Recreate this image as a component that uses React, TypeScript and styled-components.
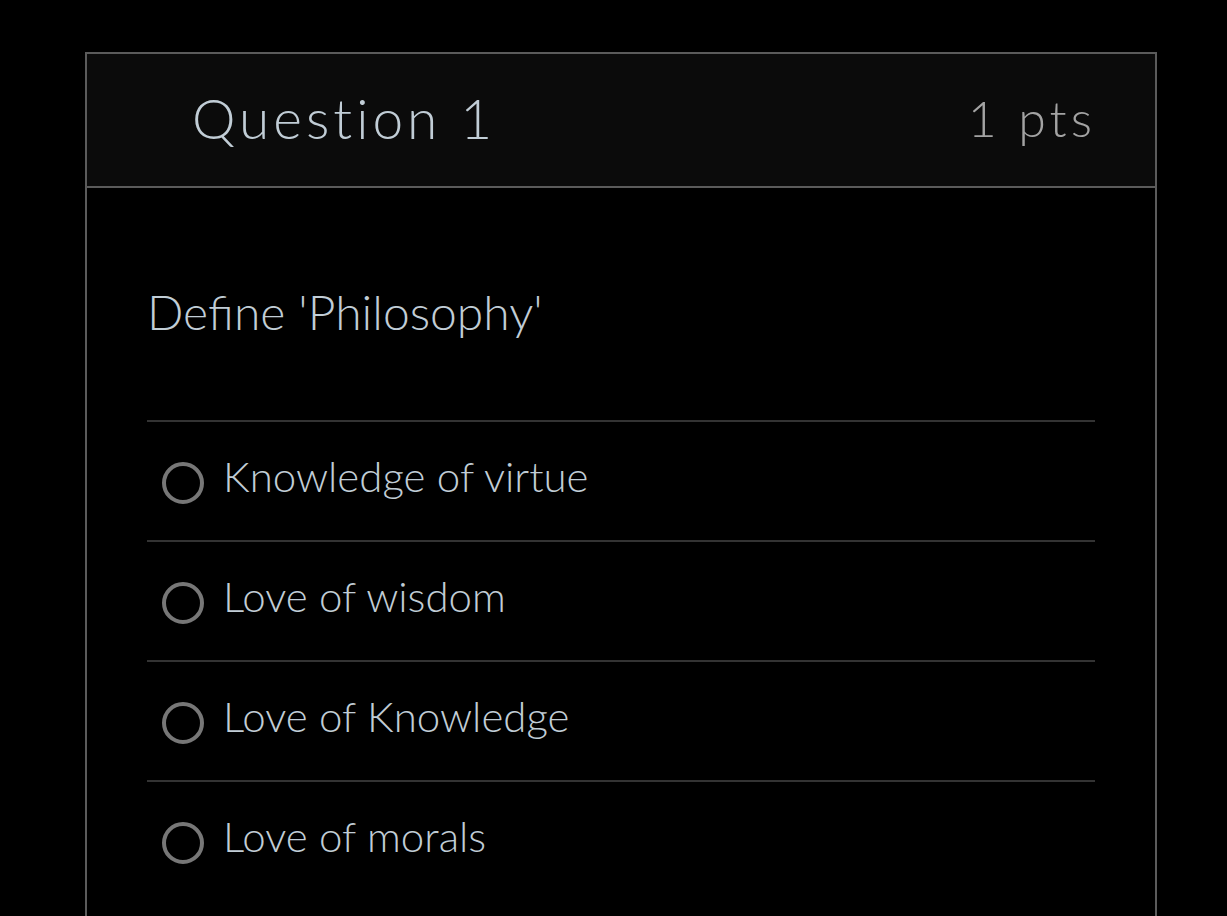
import React from 'react';
import styled, { createGlobalStyle } from 'styled-components';

const Global = createGlobalStyle`
    html, body {
        margin: 0;
        padding: 0;
        background: #000;
    }
    body {
        font-family: Lato, "Noto Sans", sans-serif;
        overflow: hidden;
    }
`;

const Page = styled.div`
    padding: 52px 0 0 85px;
    height: 916px;
    box-sizing: border-box;
`;
const Card = styled.div`
    width: 1072px;
    min-height: 900px;
    box-sizing: border-box;
    border: 2px solid #5b5b5b;
    border-bottom: none;
    background: #000;
`;
const Header = styled.div`
    display: flex;
    align-items: center;
    justify-content: space-between;
    height: 134px;
    box-sizing: border-box;
    padding: 0 59px 4px 105px;
    background: #0b0b0b;
    border-bottom: 2px solid #5b5b5b;
`;
const Title = styled.div`
    font-size: 55px;
    font-weight: 300;
    letter-spacing: 4px;
    color: #c1cdd6;
`;
const Points = styled.div`
    font-size: 50px;
    font-weight: 300;
    letter-spacing: 4px;
    color: #a3a3a3;
`;
const Body = styled.div`
    padding: 94px 60px 0 60px;
`;
const Prompt = styled.div`
    font-size: 48px;
    font-weight: 300;
    color: #c1cdd6;
    line-height: 60px;
    margin-bottom: 78px;
`;
const Option = styled.label`
    display: flex;
    align-items: center;
    height: 120px;
    box-sizing: border-box;
    border-top: 2px solid #333;
    padding-left: 15px;
    gap: 19px;
`;
const Radio = styled.span`
    width: 42px;
    height: 42px;
    box-sizing: border-box;
    border-radius: 50%;
    border: 4px solid #777;
    margin-top: 4px;
    flex: none;
`;
const OptionText = styled.span`
    font-size: 42px;
    font-weight: 300;
    color: #c1cdd6;
    margin-top: -10px;
`;

const answers = ['Knowledge of virtue', 'Love of wisdom', 'Love of Knowledge', 'Love of morals'];

export default function App() {
    return (
        <Page>
            <Global />
            <Card>
                <Header>
                    <Title>Question 1</Title>
                    <Points>1 pts</Points>
                </Header>
                <Body>
                    <Prompt>Define 'Philosophy'</Prompt>
                    {answers.map(a => (
                        <Option key={a}>
                            <Radio />
                            <OptionText>{a}</OptionText>
                        </Option>
                    ))}
                </Body>
            </Card>
        </Page>
    );
}
